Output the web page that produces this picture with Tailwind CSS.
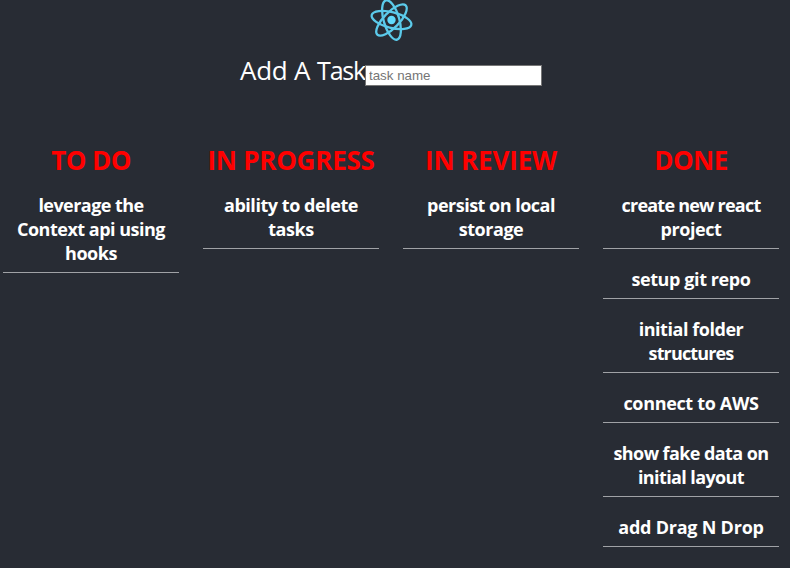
<!DOCTYPE html>
<html lang="en">
<head>
<meta charset="utf-8">
<title>Task Board</title>
<script src="https://cdn.jsdelivr.net/npm/@tailwindcss/browser@4"></script>
</head>
<body class="bg-[#282c34] text-white font-['Open_Sans',sans-serif] overflow-hidden">
<div class="h-[568px] flex flex-col">
  <header class="flex flex-col items-center">
    <svg class="w-[50px] h-[42px] overflow-visible" viewBox="-25 -20 50 42" fill="none" stroke="#5bcaea" stroke-width="2.3">
      <g transform="translate(-3.5 0)">
        <circle r="4.2" fill="#61dafb" stroke="none"/>
        <ellipse rx="20.4" ry="7.8" transform="rotate(14)"/>
        <ellipse rx="20.4" ry="7.8" transform="rotate(74)"/>
        <ellipse rx="20.4" ry="7.8" transform="rotate(134)"/>
      </g>
    </svg>
  </header>
  <form class="flex items-start pl-[240px] pt-[10px] h-[100px]">
    <label class="flex justify-between w-[125px] whitespace-nowrap text-[26px] leading-[36px]" for="task"><span class="tracking-[-0.3px]">Add </span><span>A </span><span class="tracking-[-1.2px] text-[25px]">Task</span></label>
    <input id="task" class="mt-[13px] w-[177px] h-[21px] border border-[#767676] bg-white pl-[3px] text-[13.333px] leading-[15px] text-black placeholder:text-[#757575] font-['Liberation_Sans',sans-serif]" placeholder="task name">
  </form>
  <main class="grid grid-cols-[repeat(4,176px)] gap-x-6 pl-[3px] text-center font-bold text-[18px] leading-6 tracking-[-0.45px]">
    <section>
      <h2 class="text-[26px] leading-9 text-[#ff0000] tracking-[-0.55px] mb-[15px]">TO DO</h2>
      <p class="pb-[7px] border-b border-[#a0a2a6]"><span class="tracking-[-0.55px]">leverage the</span><br><span class="tracking-[-0.5px]">Context api using</span><br>hooks</p>
    </section>
    <section>
      <h2 class="text-[26px] leading-9 text-[#ff0000] tracking-[-0.24px] mb-[15px] whitespace-nowrap">IN PROGRESS</h2>
      <p class="pb-[7px] border-b border-[#a0a2a6]">ability to delete<br>tasks</p>
    </section>
    <section>
      <h2 class="text-[26px] leading-9 text-[#ff0000] tracking-[-0.15px] mb-[15px]">IN REVIEW</h2>
      <p class="pb-[7px] border-b border-[#a0a2a6]"><span class="tracking-[-0.5px]">persist on local</span><br>storage</p>
    </section>
    <section>
      <h2 class="text-[26px] leading-9 text-[#ff0000] tracking-[-0.5px] mb-[15px]">DONE</h2>
      <div class="flex flex-col gap-[18px]">
        <p class="pb-[7px] border-b border-[#a0a2a6]"><span class="tracking-[-0.78px]">create new react</span><br>project</p>
        <p class="pb-[7px] border-b border-[#a0a2a6] tracking-[-0.4px]">setup git repo</p>
        <p class="pb-[7px] border-b border-[#a0a2a6]">initial folder<br><span class="tracking-[-0.85px]">structures</span></p>
        <p class="pb-[7px] border-b border-[#a0a2a6] tracking-[-0.33px]">connect to AWS</p>
        <p class="pb-[7px] border-b border-[#a0a2a6]"><span class="tracking-[-0.58px]">show fake data on</span><br><span class="tracking-[-0.6px]">initial layout</span></p>
        <p class="pb-[7px] border-b border-[#a0a2a6] tracking-[-0.23px]">add Drag N Drop</p>
      </div>
    </section>
  </main>
</div>
</body>
</html>
